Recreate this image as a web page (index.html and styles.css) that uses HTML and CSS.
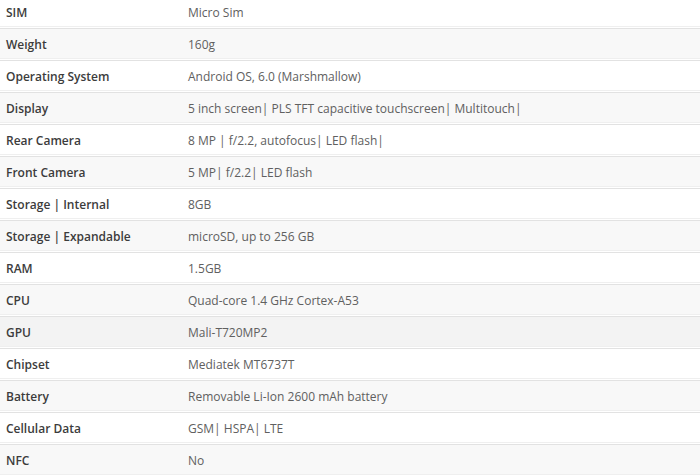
FILE: index.html
```html
<!DOCTYPE html>
<html lang="en">
<head>
<meta charset="utf-8">
<title>Specifications</title>
<link rel="stylesheet" href="styles.css">
</head>
<body>
<div class="specs">
  <div class="row"><div class="label">SIM</div><div class="value">Micro Sim</div></div>
  <div class="row alt"><div class="label">Weight</div><div class="value">160g</div></div>
  <div class="row"><div class="label">Operating System</div><div class="value">Android OS, 6.0 (Marshmallow)</div></div>
  <div class="row alt"><div class="label">Display</div><div class="value">5 inch screen| PLS TFT capacitive touchscreen| Multitouch|</div></div>
  <div class="row"><div class="label">Rear Camera</div><div class="value">8 MP | f/2.2, autofocus| LED flash|</div></div>
  <div class="row alt"><div class="label">Front Camera</div><div class="value">5 MP| f/2.2| LED flash</div></div>
  <div class="row"><div class="label">Storage | Internal</div><div class="value">8GB</div></div>
  <div class="row alt"><div class="label">Storage | Expandable</div><div class="value">microSD, up to 256 GB</div></div>
  <div class="row"><div class="label">RAM</div><div class="value">1.5GB</div></div>
  <div class="row alt"><div class="label">CPU</div><div class="value">Quad-core 1.4 GHz Cortex-A53</div></div>
  <div class="row hover"><div class="label">GPU</div><div class="value">Mali-T720MP2</div></div>
  <div class="row"><div class="label">Chipset</div><div class="value">Mediatek MT6737T</div></div>
  <div class="row alt"><div class="label">Battery</div><div class="value">Removable Li-Ion 2600 mAh battery</div></div>
  <div class="row"><div class="label">Cellular Data</div><div class="value">GSM| HSPA| LTE</div></div>
  <div class="row alt"><div class="label">NFC</div><div class="value">No</div></div>
</div>
</body>
</html>
```

FILE: styles.css
```css
html, body {
  margin: 0;
  padding: 0;
  background: #fff;
}

body {
  font-family: "Open Sans", "Liberation Sans", sans-serif;
  font-size: 12px;
  overflow: hidden;
}

.specs {
  margin-top: -3px;
}

.row {
  display: grid;
  grid-template-columns: 182px 1fr;
  padding-bottom: 1px;
  border-bottom: 1px solid #e2e2e2;
  background: #fff;
}

.row > div {
  height: 29px;
  line-height: 31px;
  overflow: hidden;
  border-bottom: 1px solid #efefef;
  background: #fff;
  white-space: nowrap;
}

.row.alt > div {
  background: #f8f8f8;
}

.row.hover > div {
  background: #f3f3f3;
}

.label {
  padding-left: 6px;
  font-weight: 600;
  color: #3c3c3c;
}

.value {
  padding-left: 6px;
  color: #606060;
}
```
